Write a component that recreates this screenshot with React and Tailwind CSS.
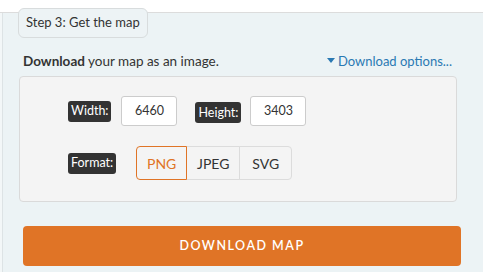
import { useState } from 'react';

const font = { fontFamily: '"Source Sans Pro", Lato, "Liberation Sans", sans-serif' };

const Tag = ({ children }) => (
  <span className="inline-flex items-center h-[21px] px-[3px] rounded-[3px] bg-[#333] text-white text-[12.5px] leading-none">
    {children}
  </span>
);

const NumInput = ({ value }) => (
  <div className="w-[56px] h-[30px] flex items-center justify-center bg-white border border-[#ccc] rounded-[3px] text-[12.5px] text-[#333]">
    {value}
  </div>
);

export default function App() {
  const [format, setFormat] = useState('PNG');
  const formats = ['PNG', 'JPEG', 'SVG'];

  return (
    <div className="w-[483px] h-[272px] bg-white overflow-hidden" style={font}>
      <div className="mt-[12px] h-[260px] border-t border-[#dcdcdc] bg-[#ecf3f5] flex">
        <div className="w-[3px] shrink-0 bg-[#f3f7f8] border-r border-[#dde3e5]" />
        <div className="flex-1 flex flex-col">
          {/* Step header */}
          <div className="-mt-[5px] ml-[15px] self-start h-[30px] px-[7px] flex items-center rounded-[6px] border border-[#d8dcdd] bg-[#edf3f5] text-[13px] text-[#333]">
            Step 3: Get the map
          </div>

          <div className="mt-[15px] flex items-center justify-between pl-[20px] pr-[31px] text-[13.5px] leading-[16px]">
            <p className="text-[#333]">
              <span className="font-bold">Download</span> your map as an image.
            </p>
            <span className="flex items-center gap-[3px] text-[#2a79b3] text-[13px]">
              <svg width="8" height="6" viewBox="0 0 8 6">
                <path d="M0 0h8L4 5z" fill="#2a79b3" />
              </svg>
              Download options...
            </span>
          </div>

          {/* Options box */}
          <div className="mt-[7px] ml-[16px] w-[438px] h-[126px] rounded-[4px] border border-[#dadada] bg-[#f4f4f4] pl-[48px] pt-[19px] flex flex-col gap-[20px]">
            <div className="flex items-center h-[30px]">
              <Tag>Width:</Tag>
              <div className="ml-[10px]"><NumInput value="6460" /></div>
              <div className="ml-[18px]"><Tag>Height:</Tag></div>
              <div className="ml-[9px]"><NumInput value="3403" /></div>
            </div>
            <div className="flex items-center gap-[20px]">
              <Tag>Format:</Tag>
              <div className="flex h-[34px]">
                {formats.map((f, i) => (
                  <button
                    key={f}
                    onClick={() => setFormat(f)}
                    className={`h-full text-[14px] border ${
                      i === 0 ? 'w-[51px] rounded-l-[4px]' : i === 2 ? 'w-[53px] rounded-r-[4px] -ml-px' : 'w-[54px] -ml-px'
                    } ${
                      format === f
                        ? 'relative z-10 border-[#e07426] text-[#e07426] bg-[#f4f4f4]'
                        : 'border-[#dcdcdc] text-[#333] bg-[#f4f4f4]'
                    }`}
                  >
                    {f}
                  </button>
                ))}
              </div>
            </div>
          </div>

          <button className="mt-[24px] ml-[20px] w-[438px] h-[40px] rounded-[4px] bg-[#e07426] text-white text-[12.5px] font-semibold tracking-[0.12em]">
            DOWNLOAD MAP
          </button>
        </div>
      </div>
    </div>
  );
}
